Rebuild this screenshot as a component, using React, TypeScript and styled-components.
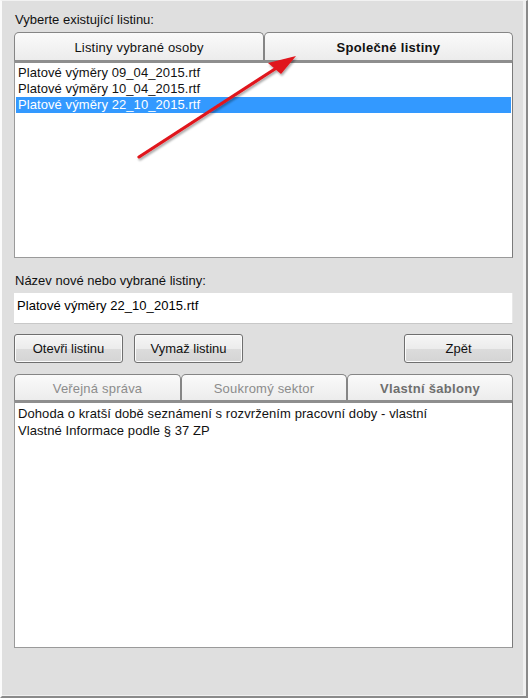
import React from "react";
import styled, { createGlobalStyle } from "styled-components";

const Global = createGlobalStyle`
  html, body { margin: 0; padding: 0; background: #dfdfdf; }
  body { font-family: "Liberation Sans", Arial, sans-serif; font-size: 13px; color: #000; }
  * { box-sizing: border-box; }
`;

const Frame = styled.div`
  position: relative;
  width: 528px;
  height: 698px;
  background: #dfdfdf;
  border-top: 1px solid #f2f2f2;
  border-left: 2px solid #fbfbfb;
  border-right: 2px solid #8a8a8a;
  border-bottom: 2px solid #8a8a8a;
  box-shadow: inset -3px -1px 0 #f0f0f0;
  padding: 11px 13px 0 12px;
  display: flex;
  flex-direction: column;
`;

const Label = styled.div<{ $mt?: number }>`
  height: 16px;
  line-height: 16px;
  margin-top: ${(p) => p.$mt ?? 0}px;
  padding-left: 1px;
  color: #111;
`;

const TabRow = styled.div<{ $h: number; $mt: number }>`
  display: flex;
  align-items: flex-end;
  height: ${(p) => p.$h}px;
  margin-top: ${(p) => p.$mt}px;
`;

const Tab = styled.div<{ $active?: boolean; $w: number; $muted?: boolean }>`
  width: ${(p) => p.$w}px;
  height: 100%;
  border: 1px solid #858585;
  border-bottom: none;
  border-radius: 5px 5px 0 0;
  background: linear-gradient(#fafafa, #ececec);
  display: flex;
  align-items: center;
  justify-content: center;
  font-weight: ${(p) => (p.$active ? "bold" : "normal")};
  color: ${(p) => (p.$muted ? (p.$active ? "#6e6e6e" : "#8c8c8c") : "#111")};
  letter-spacing: ${(p) => (p.$active ? "0.3px" : "0.2px")};
  padding-top: 1px;
`;

const Box = styled.div<{ $h: number }>`
  height: ${(p) => p.$h}px;
  background: #fff;
  border: 1px solid #9a9a9a;
  border-top: 3px solid #8e8e8e;
  border-right-color: #7a7a7a;
  padding: 2px 1px 1px;
`;

const Row = styled.div<{ $selected?: boolean; $h?: number }>`
  height: ${(p) => p.$h ?? 16}px;
  line-height: ${(p) => p.$h ?? 16}px;
  padding-left: 2px;
  white-space: nowrap;
  letter-spacing: 0.08px;
  background: ${(p) => (p.$selected ? "#3399ff" : "transparent")};
  color: ${(p) => (p.$selected ? "#fff" : "#111")};
`;

const Input = styled.div`
  height: 31px;
  margin-top: 4px;
  background: #fff;
  border-bottom: 1px solid #c8c8c8;
  border-right: 1px solid #e8e8e8;
  padding: 5px 0 0 3px;
  line-height: 16px;
  letter-spacing: 0.05px;
`;

const ButtonRow = styled.div`
  display: flex;
  gap: 11px;
  margin-top: 10px;
  height: 29px;
`;

const Spacer = styled.div`
  flex: 1;
`;

const Button = styled.div<{ $w: number }>`
  width: ${(p) => p.$w}px;
  height: 29px;
  border: 1px solid #6f6f6f;
  border-radius: 3px;
  background: linear-gradient(#f6f6f6 0%, #ececec 50%, #dcdcdc 51%, #d4d4d4 100%);
  box-shadow: inset 0 0 0 1px #fbfbfb;
  display: flex;
  align-items: center;
  justify-content: center;
  color: #111;
`;

const Content = styled.div`
  height: 248px;
  background: #fff;
  border: 1px solid #9a9a9a;
  border-top: 3px solid #8e8e8e;
  border-right-color: #7a7a7a;
  padding: 2px 1px 1px;
`;

const Overlay = styled.svg`
  position: absolute;
  left: 0;
  top: 0;
  pointer-events: none;
`;

export default function App() {
  return (
    <>
      <Global />
      <Frame>
        <Label>Vyberte existující listinu:</Label>
        <TabRow $h={28} $mt={4}>
          <Tab $w={250}>Listiny vybrané osoby</Tab>
          <Tab $w={249} $active>Společné listiny</Tab>
        </TabRow>
        <Box $h={198}>
          <Row>Platové výměry 09_04_2015.rtf</Row>
          <Row>Platové výměry 10_04_2015.rtf</Row>
          <Row $selected>Platové výměry 22_10_2015.rtf</Row>
        </Box>
        <Label $mt={15}>Název nové nebo vybrané listiny:</Label>
        <Input>Platové výměry 22_10_2015.rtf</Input>
        <ButtonRow>
          <Button $w={109}>Otevři listinu</Button>
          <Button $w={109}>Vymaž listinu</Button>
          <Spacer />
          <Button $w={109}>Zpět</Button>
        </ButtonRow>
        <TabRow $h={26} $mt={11}>
          <Tab $w={167} $muted>Veřejná správa</Tab>
          <Tab $w={166} $muted>Soukromý sektor</Tab>
          <Tab $w={166} $muted $active>Vlastní šablony</Tab>
        </TabRow>
        <Content>
          <Row $h={17}>Dohoda o kratší době seznámení s rozvržením pracovní doby - vlastní</Row>
          <Row $h={17}>Vlastné Informace podle § 37 ZP</Row>
        </Content>
        <Overlay width="528" height="698" viewBox="0 0 528 698">
          <defs>
            <filter id="sh" x="-20%" y="-20%" width="140%" height="140%">
              <feDropShadow dx="1" dy="2" stdDeviation="1.2" floodColor="#000" floodOpacity="0.35" />
            </filter>
          </defs>
          <g filter="url(#sh)">
            <line x1="137" y1="156" x2="276" y2="66" stroke="#e0141c" strokeWidth="3.2" strokeLinecap="round" />
            <polygon points="294,55 266,62 279,73" fill="#e0141c" />
          </g>
        </Overlay>
      </Frame>
    </>
  );
}
